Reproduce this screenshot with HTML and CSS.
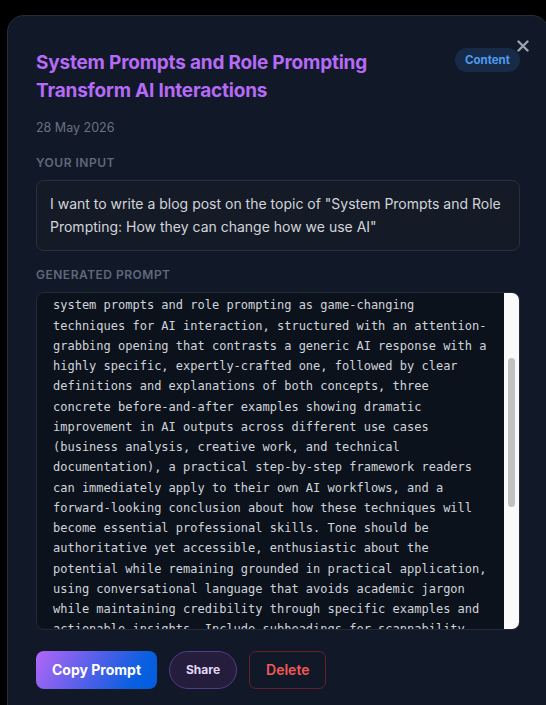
FILE: index.html
```html
<!DOCTYPE html>
<html lang="en">
<head>
<meta charset="utf-8">
<title>System Prompts and Role Prompting</title>
<link rel="stylesheet" href="styles.css">
</head>
<body>
<div class="backdrop">
  <section class="modal">
    <button class="close-btn" aria-label="Close">
      <svg width="12" height="12" viewBox="0 0 12 12"><path d="M1.5 1.5 L10.5 10.5 M10.5 1.5 L1.5 10.5" stroke="currentColor" stroke-width="2.4" stroke-linecap="round"/></svg>
    </button>
    <header class="modal-header">
      <h1 class="modal-title">System Prompts and Role Prompting Transform AI Interactions</h1>
      <span class="badge">Content</span>
    </header>
    <p class="date">28 May 2026</p>

    <h2 class="field-label">Your Input</h2>
    <div class="input-box">I want to write a blog post on the topic of "System Prompts and Role Prompting: How they can change how we use AI"</div>

    <h2 class="field-label label-gap">Generated Prompt</h2>
    <div class="prompt-frame">
      <div class="prompt-output" id="promptOutput">Act as an experienced technology writer and AI educator who specializes in making complex concepts practical for everyday professionals. Write an engaging, in-depth blog post of approximately 1,800-2,200 words titled "System Prompts and Role Prompting: How They Can Change How We Use AI" for a general audience of knowledge workers, creators, and team leaders. The post should introduce and position system prompts and role prompting as game-changing techniques for AI interaction, structured with an attention-grabbing opening that contrasts a generic AI response with a highly specific, expertly-crafted one, followed by clear definitions and explanations of both concepts, three concrete before-and-after examples showing dramatic improvement in AI outputs across different use cases (business analysis, creative work, and technical documentation), a practical step-by-step framework readers can immediately apply to their own AI workflows, and a forward-looking conclusion about how these techniques will become essential professional skills. Tone should be authoritative yet accessible, enthusiastic about the potential while remaining grounded in practical application, using conversational language that avoids academic jargon while maintaining credibility through specific examples and actionable insights. Include subheadings for scannability, short bulleted summaries of key takeaways after each major section, and at least one reusable system prompt template that readers can copy and adapt for their own work. Open with a relatable scenario in which a busy professional receives a bland, generic answer from an AI assistant, then show how a single well-written system prompt turns that same request into a focused, expert-level response. Close with a clear call to action that encourages readers to try role prompting in their next conversation and share their results in the comments. Finally, suggest an SEO-friendly meta description under 160 characters and three alternative headline options.</div>
      <div class="scroll-track"><div class="scroll-thumb" id="scrollThumb"></div></div>
    </div>

    <div class="actions">
      <button class="btn btn-copy">Copy Prompt</button>
      <button class="btn btn-share">Share</button>
      <button class="btn btn-delete">Delete</button>
    </div>
  </section>
</div>
<script src="script.js"></script>
</body>
</html>
```

FILE: styles.css
```css
html, body {
  margin: 0;
  height: 100%;
  overflow: hidden;
  background: #000;
}

body {
  font-family: Inter, "Noto Sans", sans-serif;
}

.backdrop {
  padding: 15px 0 0 7px;
}

.modal {
  position: relative;
  box-sizing: border-box;
  width: 542px;
  min-height: 740px;
  padding: 33px 28px 40px;
  background: #111827;
  border: 1px solid #272d39;
  border-radius: 17px;
}

.close-btn {
  position: absolute;
  top: 23px;
  right: 18px;
  width: 14px;
  height: 14px;
  padding: 1px;
  border: 0;
  background: none;
  color: #9ca3af;
  display: flex;
  align-items: center;
  justify-content: center;
}

.modal-header {
  display: flex;
  align-items: flex-start;
  gap: 16px;
}

.modal-title {
  flex: 1;
  margin: 0;
  font-size: 19px;
  line-height: 28px;
  font-weight: 700;
  letter-spacing: -0.2px;
  color: #b56bf6;
}

.badge {
  flex: none;
  height: 24px;
  padding: 0 10px;
  display: flex;
  align-items: center;
  border-radius: 12px;
  background: #172a47;
  color: #4f9cf1;
  font-size: 11.5px;
  font-weight: 700;
  margin-top: -1px;
}

.date {
  margin: 14px 0 0;
  font-size: 12.5px;
  line-height: 18px;
  color: #6b7280;
}

.field-label {
  margin: 18px 0 9px;
  font-size: 12px;
  line-height: 16px;
  font-weight: 600;
  letter-spacing: 0.5px;
  text-transform: uppercase;
  color: #5f697a;
}

.label-gap {
  margin-top: 16px;
}

.input-box {
  padding: 11px 13px;
  background: #151b26;
  border: 1px solid #2a303b;
  border-radius: 8px;
  font-size: 14px;
  line-height: 23.3px;
  color: #d1d5db;
}

/* Prompt viewer: text pane plus its own scrollbar rail */
.prompt-frame {
  box-sizing: border-box;
  height: 338px;
  display: flex;
  overflow: hidden;
  background: #0c121c;
  border: 1px solid #232a35;
  border-radius: 8px;
}

.prompt-output {
  flex: 1;
  min-width: 0;
  padding: 14px 14px 14px 16px;
  overflow: hidden;
  font-family: "DejaVu Sans Mono", "Liberation Mono", monospace;
  font-size: 12px;
  line-height: 20.25px;
  color: #d0d4da;
}

.scroll-track {
  flex: none;
  width: 15px;
  background: #fafafa;
  display: flex;
  flex-direction: column;
}

.scroll-thumb {
  margin: 65px 4px 0;
  height: 146px;
  border-radius: 4px;
  background: #c1c1c1;
}

.actions {
  display: flex;
  gap: 12px;
  margin-top: 21px;
}

.btn {
  box-sizing: border-box;
  height: 38px;
  padding: 0 16px;
  font-family: Inter, "Noto Sans", sans-serif;
  font-weight: 700;
  cursor: pointer;
}

.btn-copy {
  border: 0;
  border-radius: 8px;
  background: linear-gradient(120deg, #b266f7 0%, #4a5fe8 50%, #0a5fe0 80%, #005ddf 100%);
  color: #fff;
  font-size: 14px;
}

.btn-share {
  padding: 0 16px;
  border: 1.5px solid #573a8c;
  border-radius: 19px;
  background: #241d3c;
  color: #e2d8f7;
  font-size: 12px;
}

.btn-delete {
  padding: 0 16px;
  border: 1px solid #6a1e29;
  border-radius: 7px;
  background: transparent;
  color: #f15858;
  font-size: 14px;
  font-weight: 600;
}
```

FILE: script.js
```js
var pane = document.getElementById('promptOutput');
var thumb = document.getElementById('scrollThumb');
pane.scrollTop = 153;

var view = pane.clientHeight;
var total = pane.scrollHeight;
var thumbH = Math.max(24, Math.round(view * view / total));
var maxScroll = total - view;
var top = maxScroll > 0 ? Math.round(pane.scrollTop / maxScroll * (view - thumbH)) : 0;
thumb.style.height = thumbH + 'px';
thumb.style.marginTop = top + 'px';
```
